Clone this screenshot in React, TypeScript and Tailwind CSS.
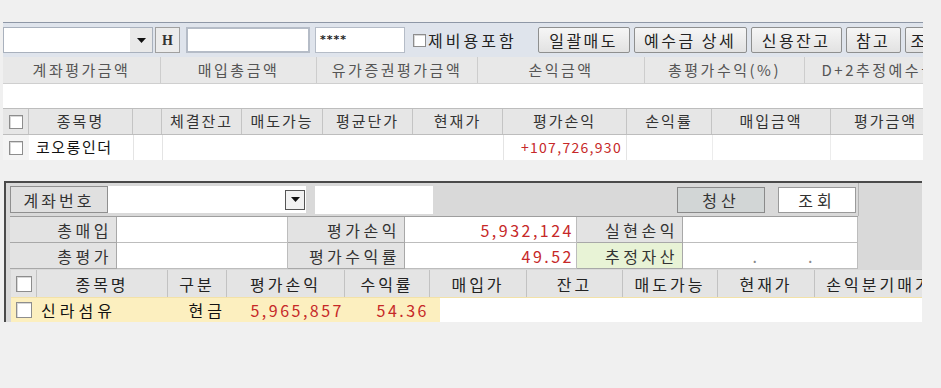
import React from "react";

const FONT = "font-['Noto_Sans_CJK_KR','Noto_Sans',sans-serif]";

const summaryCols = [
  { w: 158, label: "계좌평가금액" },
  { w: 156, label: "매입총금액" },
  { w: 161, label: "유가증권평가금액" },
  { w: 167, label: "손익금액" },
  { w: 160, label: "총평가수익(%)" },
  { w: 150, label: "D+2추정예수금" },
];

const topGrid = [
  { w: 104, label: "종목명" },
  { w: 29, label: "" },
  { w: 80, label: "체결잔고" },
  { w: 81, label: "매도가능" },
  { w: 90, label: "평균단가" },
  { w: 90, label: "현재가" },
  { w: 124, label: "평가손익" },
  { w: 85, label: "손익률" },
  { w: 119, label: "매입금액" },
  { w: 110, label: "평가금액" },
];

const bottomGrid = [
  { w: 131, label: "종목명" },
  { w: 59, label: "구분" },
  { w: 118, label: "평가손익" },
  { w: 85, label: "수익률" },
  { w: 97, label: "매입가" },
  { w: 96, label: "잔고" },
  { w: 95, label: "매도가능" },
  { w: 97, label: "현재가" },
  { w: 130, label: "손익분기매가" },
];

function Check({ size = 14 }: { size?: number }) {
  return (
    <span
      className="inline-block shrink-0 border border-[#8d8d8d] bg-white shadow-[inset_1px_1px_0_#d8d8d8]"
      style={{ width: size, height: size }}
    />
  );
}

function WinButton({ w, children }: { w: number; children: React.ReactNode }) {
  return (
    <button
      className="flex h-[26px] shrink-0 items-center justify-center overflow-hidden whitespace-nowrap rounded-[2px] border border-[#8e8f8f] bg-gradient-to-b from-[#f6f6f6] to-[#e2e2e2] text-[16px] tracking-[2.5px] text-[#222]"
      style={{ width: w }}
    >
      {children}
    </button>
  );
}

function DropArrow({ boxed }: { boxed?: boolean }) {
  return (
    <span
      className={
        boxed
          ? "flex h-[20px] w-[20px] items-center justify-center border border-[#555] bg-[#f2f2f2]"
          : "flex h-full w-[22px] items-center justify-center bg-[#e9e9e9]"
      }
    >
      <svg width="9" height="5" viewBox="0 0 9 5">
        <path d="M0 0h9L4.5 5z" fill="#111" />
      </svg>
    </span>
  );
}

export default function App() {
  return (
    <div className={`h-[388px] w-[941px] overflow-hidden bg-[#f0f0f0] ${FONT}`}>
      {/* top panel */}
      <div className="ml-[3px] mt-[22px] w-[920px] overflow-hidden">
        <div className="flex h-[35px] items-center overflow-hidden border-t border-[#8e97a6] bg-[#dfe4ec]">
          <div className="flex h-[26px] w-[150px] shrink-0 items-stretch border border-[#a9b1bd] bg-white">
            <div className="flex-1" />
            <DropArrow />
          </div>
          <button className="ml-[2px] flex h-[26px] w-[25px] shrink-0 items-center justify-center border border-[#a0a0a0] bg-[#ececec] font-['Liberation_Serif',serif] text-[14px] font-bold text-[#333]">
            H
          </button>
          <div className="ml-[6px] h-[26px] w-[124px] shrink-0 border-2 border-[#b5bcc7] bg-white" />
          <div className="ml-[5px] flex h-[26px] w-[90px] shrink-0 items-center border border-[#b5bcc7] bg-white pl-[4px] font-['DejaVu_Sans',sans-serif] text-[11px] font-bold tracking-[1px] text-[#222]">
            ****
          </div>
          <span className="ml-[8px] flex shrink-0 items-center gap-[2px]">
            <Check size={13} />
            <span className="whitespace-nowrap text-[16px] tracking-[3px] text-[#222]">제비용포함</span>
          </span>
          <span className="ml-[21px] flex shrink-0 gap-[4px]">
            <WinButton w={92}>일괄매도</WinButton>
            <WinButton w={113}>예수금 상세</WinButton>
            <WinButton w={91}>신용잔고</WinButton>
            <WinButton w={55}>참고</WinButton>
            <button className="flex h-[26px] w-[40px] shrink-0 items-center justify-start overflow-hidden whitespace-nowrap rounded-[2px] border border-[#8e8f8f] bg-gradient-to-b from-[#f6f6f6] to-[#e2e2e2] pl-[5px] text-[16px] tracking-[2.5px] text-[#222]">
              조회
            </button>
          </span>
        </div>
        <div className="flex h-[27px] border-b border-[#cfcfcf] bg-[#e8e8e8]">
          {summaryCols.map((c, i) => (
            <div
              key={i}
              className="flex shrink-0 items-center justify-center overflow-hidden whitespace-nowrap border-r border-[#cdcdcd] text-[15px] tracking-[2.5px] text-[#555]"
              style={{ width: c.w }}
            >
              {c.label}
            </div>
          ))}
        </div>
        <div className="h-[24px] bg-white" />
        <div className="flex h-[27px] border-y border-[#bdbdbd] bg-[#e6e6e6]">
          <div className="flex w-[26px] shrink-0 items-center justify-center border-r border-[#c4c4c4]">
            <Check />
          </div>
          {topGrid.map((c, i) => (
            <div
              key={i}
              className="flex shrink-0 items-center justify-center overflow-hidden whitespace-nowrap border-r border-[#c4c4c4] text-[15px] tracking-[2px] text-[#333]"
              style={{ width: c.w }}
            >
              {c.label}
            </div>
          ))}
        </div>
        <div className="flex h-[25px] bg-white">
          <div className="flex w-[26px] shrink-0 items-center justify-center bg-[#f4f4f4]">
            <Check />
          </div>
          <div className="flex w-[104px] shrink-0 items-center pl-[7px] text-[15px] tracking-[1.5px] text-[#111]">
            코오롱인더
          </div>
          <div className="w-[29px] shrink-0 border-l border-[#e4e4e4]" />
          <div className="w-[341px] shrink-0 border-l border-[#e4e4e4]" />
          <div className="flex w-[124px] shrink-0 items-center justify-end border-x border-[#e4e4e4] pr-[4px] text-[14px] tracking-[1.3px] text-[#c62828]">
            +107,726,930
          </div>
          <div className="w-[85px] shrink-0" />
          <div className="w-[119px] shrink-0 border-x border-[#ececec]" />
        </div>
      </div>

      {/* bottom panel */}
      <div className="ml-[4px] mt-[21px] h-[141px] w-[918px] overflow-hidden border-l-2 border-t-2 border-[#4a4a4a] bg-[#d9d9d9]">
        <div className="flex h-[33px] items-center pl-[4px]">
          <div className="flex h-[27px] w-[98px] items-center justify-center border border-[#8f8f8f] bg-[#e0e0e0] text-[16px] tracking-[3px] text-[#333]">
            계좌번호
          </div>
          <div className="flex h-[27px] w-[198px] items-center justify-end bg-white pr-[1px]">
            <DropArrow boxed />
          </div>
          <div className="ml-[9px] h-[28px] w-[118px] bg-white" />
          <div className="ml-[244px] flex gap-[13px]">
            <button className="flex h-[26px] w-[88px] items-center justify-center border border-[#8a8a8a] bg-[#d2d6d6] text-[16px] tracking-[4px] text-[#333]">
              청산
            </button>
            <button className="flex h-[26px] w-[78px] items-center justify-center border border-[#9a9a9a] bg-white text-[16px] tracking-[4px] text-[#333]">
              조회
            </button>
          </div>
          <div className="ml-[2px] h-full border-l border-[#b4b4b4]" />
        </div>
        <div className="ml-[4px] grid w-[848px] grid-cols-[107px_171px_117px_172px_106px_175px] border-t border-[#9e9e9e]">
          <Label>총매입</Label>
          <Value />
          <Label>평가손익</Label>
          <Value red>5,932,124</Value>
          <Label>실현손익</Label>
          <Value />
          <Label>총평가</Label>
          <Value />
          <Label>평가수익률</Label>
          <Value red>49.52</Value>
          <Label green>추정자산</Label>
          <Value>
            <span className="mr-[40px] text-[#888]">.&nbsp;&nbsp;&nbsp;&nbsp;&nbsp;&nbsp;&nbsp;&nbsp;.</span>
          </Value>
        </div>
        <div className="ml-[5px] mt-[1px] flex h-[27px] bg-[#e4e4e4]">
          <div className="flex w-[26px] shrink-0 items-center justify-center border-r border-[#c2c2c2]">
            <Check size={16} />
          </div>
          {bottomGrid.map((c, i) => (
            <div
              key={i}
              className="flex shrink-0 items-center justify-center overflow-hidden whitespace-nowrap border-r border-[#c2c2c2] text-[16px] tracking-[3px] text-[#222]"
              style={{ width: c.w }}
            >
              {c.label}
            </div>
          ))}
        </div>
        <div className="ml-[5px] flex h-[25px] border-t border-[#f3e2a8] bg-white">
          <div className="flex w-[26px] shrink-0 items-center justify-center bg-[#fcefbf]">
            <Check size={16} />
          </div>
          <div className="flex w-[131px] shrink-0 items-center bg-[#fcefbf] pl-[4px] text-[16px] tracking-[4px] text-[#111]">
            신라섬유
          </div>
          <div className="flex w-[59px] shrink-0 items-center justify-end bg-[#fcefbf] pr-[1px] text-[16px] tracking-[4px] text-[#111]">
            현금
          </div>
          <div className="flex w-[118px] shrink-0 items-center justify-end bg-[#fcefbf] pr-[1px] text-[16px] tracking-[2.5px] text-[#c62828]">
            5,965,857
          </div>
          <div className="flex w-[85px] shrink-0 items-center justify-end bg-[#fcefbf] pr-[1px] text-[16px] tracking-[2.5px] text-[#c62828]">
            54.36
          </div>
          <div className="w-[10px] shrink-0 bg-[#fcefbf]" />
        </div>
      </div>
    </div>
  );
}

function Label({ children, green }: { children: React.ReactNode; green?: boolean }) {
  return (
    <div
      className={`flex h-[26px] items-center justify-end whitespace-nowrap border-b border-r border-[#a8a8a8] pr-[4px] text-[16px] tracking-[3.5px] text-[#333] ${
        green ? "bg-[#e8f3d6]" : "bg-[#e3e3e3]"
      }`}
    >
      {children}
    </div>
  );
}

function Value({ children, red }: { children?: React.ReactNode; red?: boolean }) {
  return (
    <div
      className={`flex h-[26px] items-center justify-end whitespace-nowrap border-b border-r border-[#bdbdbd] bg-white pr-[2px] text-[16px] tracking-[2.5px] ${
        red ? "text-[#c62828]" : "text-[#333]"
      }`}
    >
      {children}
    </div>
  );
}
